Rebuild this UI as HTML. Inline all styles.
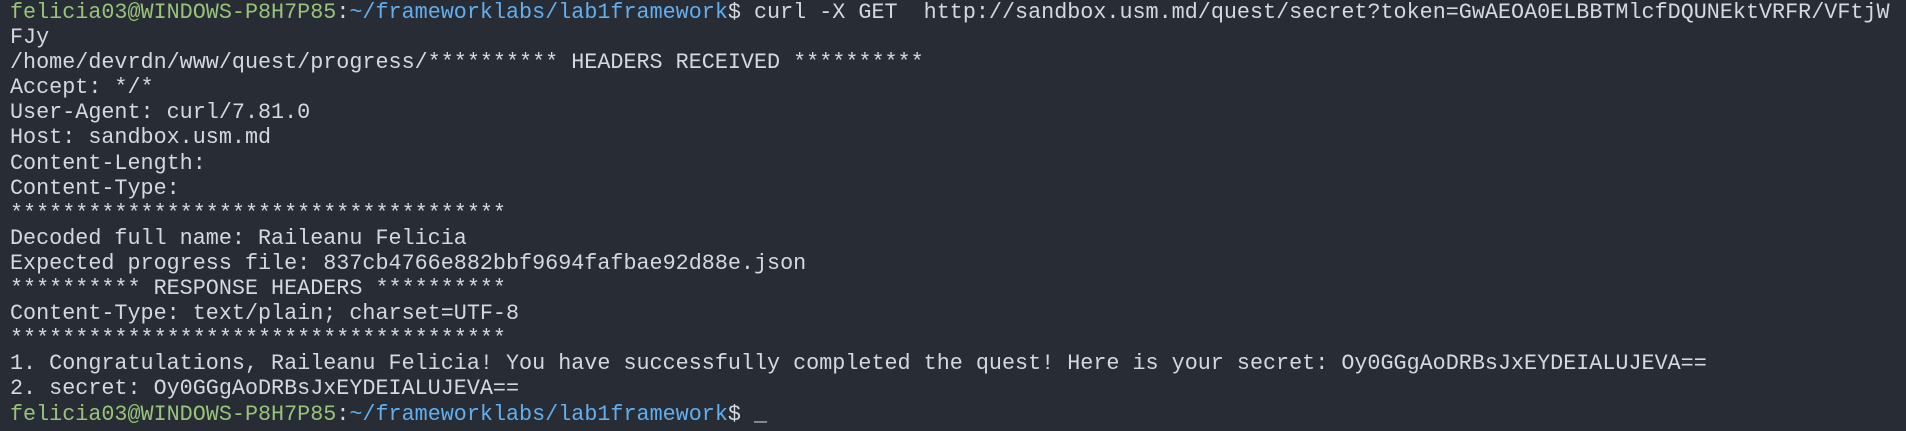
<!DOCTYPE html>
<html><head><meta charset="utf-8"><style>
html,body{margin:0;padding:0;background:#282c35;width:1906px;height:431px;overflow:hidden}
pre{margin:0;padding:0 0 0 10px;font-family:"Liberation Mono",monospace;font-size:21.75px;line-height:25.1px;color:#d4d8df;white-space:pre}
.g{color:#98c379}.b{color:#61afef}
</style></head><body><pre><span class="g">felicia03@WINDOWS-P8H7P85</span>:<span class="b">~/frameworklabs/lab1framework</span>$ curl -X GET  http://sandbox.usm.md/quest/secret?token=GwAEOA0ELBBTMlcfDQUNEktVRFR/VFtjW
FJy
/home/devrdn/www/quest/progress/********** HEADERS RECEIVED **********
Accept: */*
User-Agent: curl/7.81.0
Host: sandbox.usm.md
Content-Length:
Content-Type:
**************************************
Decoded full name: Raileanu Felicia
Expected progress file: 837cb4766e882bbf9694fafbae92d88e.json
********** RESPONSE HEADERS **********
Content-Type: text/plain; charset=UTF-8
**************************************
1. Congratulations, Raileanu Felicia! You have successfully completed the quest! Here is your secret: Oy0GGgAoDRBsJxEYDEIALUJEVA==
2. secret: Oy0GGgAoDRBsJxEYDEIALUJEVA==
<span class="g">felicia03@WINDOWS-P8H7P85</span>:<span class="b">~/frameworklabs/lab1framework</span>$ _</pre></body></html>
